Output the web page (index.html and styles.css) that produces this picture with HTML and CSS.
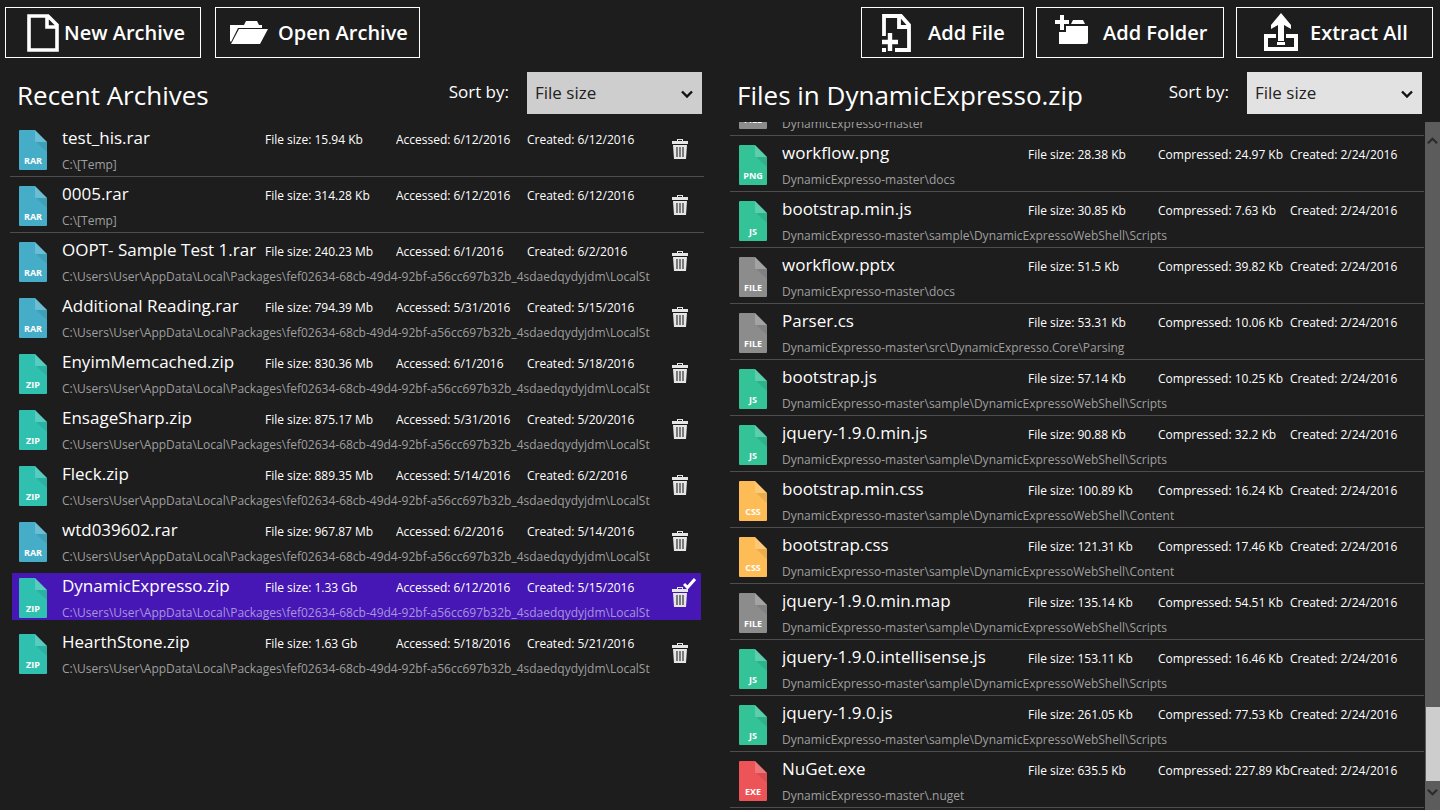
FILE: index.html
```html
<!DOCTYPE html>
<html lang="en">
<head>
    <meta charset="UTF-8">
    <meta name="viewport" content="width=device-width, initial-scale=1.0">
    <title>Archives</title>
    <link rel="stylesheet" href="styles.css">
</head>
<body>
    <!-- shared icons -->
    <svg class="icon-defs" aria-hidden="true">
        <symbol id="file" viewBox="0 0 28 40">
            <path d="M1 0h15l12 12v27a1 1 0 0 1-1 1H1a1 1 0 0 1-1-1V1a1 1 0 0 1 1-1z" fill="currentColor"/>
            <path d="M17 12h11v10z" fill="#000" opacity=".08"/>
            <path d="M16 0l12 12H17a1 1 0 0 1-1-1z" fill="#fff" opacity=".2"/>
        </symbol>
        <symbol id="trash" viewBox="0 0 16 20">
            <path d="M5 2V0h6v2h5v3H0V2h5zm1 0h4V1H6z" fill="currentColor"/>
            <path d="M1 6h14l-1 14H2z" fill="currentColor"/>
            <path d="M5 8v10M8 8v10M11 8v10" stroke="#333" stroke-width="1.2" fill="none"/>
        </symbol>
        <symbol id="chevron" viewBox="0 0 12 8">
            <path d="M1 1.5l5 5 5-5" fill="none" stroke="currentColor" stroke-width="2.4"/>
        </symbol>
    </svg>

    <div class="toolbar">
        <button type="button" class="tool new-archive">
            <svg width="32" height="38" viewBox="0 0 32 38"><path d="M2 2h19l9 9v25H2z M20 2v11h10" fill="none" stroke="#fff" stroke-width="3.6"/></svg>
            New Archive
        </button>
        <button type="button" class="tool open-archive">
            <svg width="38" height="24" viewBox="0 0 38 24"><path d="M0 20V4h14l2-4h11l2 4h3v3H8L1 21z" fill="#fff"/><path d="M9 8h29l-8 15H1z" fill="#fff"/></svg>
            Open Archive
        </button>
        <div class="spacer"></div>
        <button type="button" class="tool add-file">
            <svg width="32" height="38" viewBox="0 0 32 38">
                <path d="M4 22V2h17l8 9v25H15M19 2v11h10" fill="none" stroke="#fff" stroke-width="3.8"/>
                <path d="M10 19v18M2 28h16" stroke="#fff" stroke-width="4.4"/>
                <path d="M2 34h4v4H2z" fill="#fff"/>
            </svg>
            Add File
        </button>
        <button type="button" class="tool add-folder">
            <svg width="34" height="38" viewBox="0 0 34 38">
                <path d="M8 1v15M1 8h14" stroke="#fff" stroke-width="4"/>
                <path d="M5 18h7v-6h22v16a2 2 0 0 1-2 2H5zM17 10l2-4h10l2 4z" fill="#fff"/>
            </svg>
            Add Folder
        </button>
        <button type="button" class="tool extract">
            <svg width="38" height="40" viewBox="0 0 38 40">
                <path d="M14 23H4v13h30V23H24" fill="none" stroke="#fff" stroke-width="4"/>
                <path d="M19 0l10 12v4l-7-4v16h-6V12l-7 4v-4zM15 29h8v3h-8z" fill="#fff"/>
            </svg>
            Extract All
        </button>
    </div>

    <div class="panels">
        <div class="panel">
            <div class="panel-head">
                <h2>Recent Archives</h2>
                <label for="sort-archives">Sort by:</label>
                <div class="select-box">
                    <select id="sort-archives"><option>File size</option><option>Name</option></select>
                    <svg class="chevron"><use href="#chevron"/></svg>
                </div>
            </div>
            <div class="archives">
                <div class="row lined">
                    <svg class="file-icon rar"><use href="#file"/><text x="14" y="34">RAR</text></svg>
                    <div class="info"><span class="name">test_his.rar</span><span>File size: 15.94 Kb</span><span>Accessed: 6/12/2016</span><span>Created: 6/12/2016</span><span class="path">C:\[Temp]</span></div>
                    <button type="button" class="delete" aria-label="Delete"><svg><use href="#trash"/></svg></button>
                </div>
                <div class="row lined">
                    <svg class="file-icon rar"><use href="#file"/><text x="14" y="34">RAR</text></svg>
                    <div class="info"><span class="name">0005.rar</span><span>File size: 314.28 Kb</span><span>Accessed: 6/12/2016</span><span>Created: 6/12/2016</span><span class="path">C:\[Temp]</span></div>
                    <button type="button" class="delete" aria-label="Delete"><svg><use href="#trash"/></svg></button>
                </div>
                <div class="row">
                    <svg class="file-icon rar"><use href="#file"/><text x="14" y="34">RAR</text></svg>
                    <div class="info"><span class="name">OOPT- Sample Test 1.rar</span><span>File size: 240.23 Mb</span><span>Accessed: 6/1/2016</span><span>Created: 6/2/2016</span><span class="path">C:\Users\User\AppData\Local\Packages\fef02634-68cb-49d4-92bf-a56cc697b32b_4sdaedqydyjdm\LocalSt</span></div>
                    <button type="button" class="delete" aria-label="Delete"><svg><use href="#trash"/></svg></button>
                </div>
                <div class="row">
                    <svg class="file-icon rar"><use href="#file"/><text x="14" y="34">RAR</text></svg>
                    <div class="info"><span class="name">Additional Reading.rar</span><span>File size: 794.39 Mb</span><span>Accessed: 5/31/2016</span><span>Created: 5/15/2016</span><span class="path">C:\Users\User\AppData\Local\Packages\fef02634-68cb-49d4-92bf-a56cc697b32b_4sdaedqydyjdm\LocalSt</span></div>
                    <button type="button" class="delete" aria-label="Delete"><svg><use href="#trash"/></svg></button>
                </div>
                <div class="row">
                    <svg class="file-icon zip"><use href="#file"/><text x="14" y="34">ZIP</text></svg>
                    <div class="info"><span class="name">EnyimMemcached.zip</span><span>File size: 830.36 Mb</span><span>Accessed: 6/1/2016</span><span>Created: 5/18/2016</span><span class="path">C:\Users\User\AppData\Local\Packages\fef02634-68cb-49d4-92bf-a56cc697b32b_4sdaedqydyjdm\LocalSt</span></div>
                    <button type="button" class="delete" aria-label="Delete"><svg><use href="#trash"/></svg></button>
                </div>
                <div class="row">
                    <svg class="file-icon zip"><use href="#file"/><text x="14" y="34">ZIP</text></svg>
                    <div class="info"><span class="name">EnsageSharp.zip</span><span>File size: 875.17 Mb</span><span>Accessed: 5/31/2016</span><span>Created: 5/20/2016</span><span class="path">C:\Users\User\AppData\Local\Packages\fef02634-68cb-49d4-92bf-a56cc697b32b_4sdaedqydyjdm\LocalSt</span></div>
                    <button type="button" class="delete" aria-label="Delete"><svg><use href="#trash"/></svg></button>
                </div>
                <div class="row">
                    <svg class="file-icon zip"><use href="#file"/><text x="14" y="34">ZIP</text></svg>
                    <div class="info"><span class="name">Fleck.zip</span><span>File size: 889.35 Mb</span><span>Accessed: 5/14/2016</span><span>Created: 6/2/2016</span><span class="path">C:\Users\User\AppData\Local\Packages\fef02634-68cb-49d4-92bf-a56cc697b32b_4sdaedqydyjdm\LocalSt</span></div>
                    <button type="button" class="delete" aria-label="Delete"><svg><use href="#trash"/></svg></button>
                </div>
                <div class="row">
                    <svg class="file-icon rar"><use href="#file"/><text x="14" y="34">RAR</text></svg>
                    <div class="info"><span class="name">wtd039602.rar</span><span>File size: 967.87 Mb</span><span>Accessed: 6/2/2016</span><span>Created: 5/14/2016</span><span class="path">C:\Users\User\AppData\Local\Packages\fef02634-68cb-49d4-92bf-a56cc697b32b_4sdaedqydyjdm\LocalSt</span></div>
                    <button type="button" class="delete" aria-label="Delete"><svg><use href="#trash"/></svg></button>
                </div>
                <div class="row selected">
                    <svg class="file-icon zip"><use href="#file"/><text x="14" y="34">ZIP</text></svg>
                    <div class="info"><span class="name">DynamicExpresso.zip</span><span>File size: 1.33 Gb</span><span>Accessed: 6/12/2016</span><span>Created: 5/15/2016</span><span class="path">C:\Users\User\AppData\Local\Packages\fef02634-68cb-49d4-92bf-a56cc697b32b_4sdaedqydyjdm\LocalSt</span></div>
                    <button type="button" class="delete" aria-label="Delete"><svg><use href="#trash"/></svg></button>
                    <svg class="check" viewBox="0 0 13 11"><path d="M1 6l3.500 3.500L12 1" fill="none" stroke="#fff" stroke-width="3"/></svg>
                </div>
                <div class="row">
                    <svg class="file-icon zip"><use href="#file"/><text x="14" y="34">ZIP</text></svg>
                    <div class="info"><span class="name">HearthStone.zip</span><span>File size: 1.63 Gb</span><span>Accessed: 5/18/2016</span><span>Created: 5/21/2016</span><span class="path">C:\Users\User\AppData\Local\Packages\fef02634-68cb-49d4-92bf-a56cc697b32b_4sdaedqydyjdm\LocalSt</span></div>
                    <button type="button" class="delete" aria-label="Delete"><svg><use href="#trash"/></svg></button>
                </div>
            </div>
        </div>

        <div class="panel">
            <div class="panel-head">
                <h2>Files in DynamicExpresso.zip</h2>
                <label for="sort-files">Sort by:</label>
                <div class="select-box light">
                    <select id="sort-files"><option>File size</option><option>Name</option></select>
                    <svg class="chevron"><use href="#chevron"/></svg>
                </div>
            </div>
            <div class="files-area">
                <div class="files">
                    <div class="row lined">
                        <svg class="file-icon other"><use href="#file"/><text x="14" y="34">FILE</text></svg>
                        <div class="info"><span class="name"></span><span></span><span></span><span></span><span class="path">DynamicExpresso-master</span></div>
                    </div>
                    <div class="row lined">
                        <svg class="file-icon code"><use href="#file"/><text x="14" y="34">PNG</text></svg>
                        <div class="info"><span class="name">workflow.png</span><span>File size: 28.38 Kb</span><span>Compressed: 24.97 Kb</span><span>Created: 2/24/2016</span><span class="path">DynamicExpresso-master\docs</span></div>
                    </div>
                    <div class="row lined">
                        <svg class="file-icon code"><use href="#file"/><text x="14" y="34">JS</text></svg>
                        <div class="info"><span class="name">bootstrap.min.js</span><span>File size: 30.85 Kb</span><span>Compressed: 7.63 Kb</span><span>Created: 2/24/2016</span><span class="path">DynamicExpresso-master\sample\DynamicExpressoWebShell\Scripts</span></div>
                    </div>
                    <div class="row lined">
                        <svg class="file-icon other"><use href="#file"/><text x="14" y="34">FILE</text></svg>
                        <div class="info"><span class="name">workflow.pptx</span><span>File size: 51.5 Kb</span><span>Compressed: 39.82 Kb</span><span>Created: 2/24/2016</span><span class="path">DynamicExpresso-master\docs</span></div>
                    </div>
                    <div class="row lined">
                        <svg class="file-icon other"><use href="#file"/><text x="14" y="34">FILE</text></svg>
                        <div class="info"><span class="name">Parser.cs</span><span>File size: 53.31 Kb</span><span>Compressed: 10.06 Kb</span><span>Created: 2/24/2016</span><span class="path">DynamicExpresso-master\src\DynamicExpresso.Core\Parsing</span></div>
                    </div>
                    <div class="row lined">
                        <svg class="file-icon code"><use href="#file"/><text x="14" y="34">JS</text></svg>
                        <div class="info"><span class="name">bootstrap.js</span><span>File size: 57.14 Kb</span><span>Compressed: 10.25 Kb</span><span>Created: 2/24/2016</span><span class="path">DynamicExpresso-master\sample\DynamicExpressoWebShell\Scripts</span></div>
                    </div>
                    <div class="row lined">
                        <svg class="file-icon code"><use href="#file"/><text x="14" y="34">JS</text></svg>
                        <div class="info"><span class="name">jquery-1.9.0.min.js</span><span>File size: 90.88 Kb</span><span>Compressed: 32.2 Kb</span><span>Created: 2/24/2016</span><span class="path">DynamicExpresso-master\sample\DynamicExpressoWebShell\Scripts</span></div>
                    </div>
                    <div class="row lined">
                        <svg class="file-icon css"><use href="#file"/><text x="14" y="34">CSS</text></svg>
                        <div class="info"><span class="name">bootstrap.min.css</span><span>File size: 100.89 Kb</span><span>Compressed: 16.24 Kb</span><span>Created: 2/24/2016</span><span class="path">DynamicExpresso-master\sample\DynamicExpressoWebShell\Content</span></div>
                    </div>
                    <div class="row lined">
                        <svg class="file-icon css"><use href="#file"/><text x="14" y="34">CSS</text></svg>
                        <div class="info"><span class="name">bootstrap.css</span><span>File size: 121.31 Kb</span><span>Compressed: 17.46 Kb</span><span>Created: 2/24/2016</span><span class="path">DynamicExpresso-master\sample\DynamicExpressoWebShell\Content</span></div>
                    </div>
                    <div class="row lined">
                        <svg class="file-icon other"><use href="#file"/><text x="14" y="34">FILE</text></svg>
                        <div class="info"><span class="name">jquery-1.9.0.min.map</span><span>File size: 135.14 Kb</span><span>Compressed: 54.51 Kb</span><span>Created: 2/24/2016</span><span class="path">DynamicExpresso-master\sample\DynamicExpressoWebShell\Scripts</span></div>
                    </div>
                    <div class="row lined">
                        <svg class="file-icon code"><use href="#file"/><text x="14" y="34">JS</text></svg>
                        <div class="info"><span class="name">jquery-1.9.0.intellisense.js</span><span>File size: 153.11 Kb</span><span>Compressed: 16.46 Kb</span><span>Created: 2/24/2016</span><span class="path">DynamicExpresso-master\sample\DynamicExpressoWebShell\Scripts</span></div>
                    </div>
                    <div class="row lined">
                        <svg class="file-icon code"><use href="#file"/><text x="14" y="34">JS</text></svg>
                        <div class="info"><span class="name">jquery-1.9.0.js</span><span>File size: 261.05 Kb</span><span>Compressed: 77.53 Kb</span><span>Created: 2/24/2016</span><span class="path">DynamicExpresso-master\sample\DynamicExpressoWebShell\Scripts</span></div>
                    </div>
                    <div class="row lined">
                        <svg class="file-icon exe"><use href="#file"/><text x="14" y="34">EXE</text></svg>
                        <div class="info"><span class="name">NuGet.exe</span><span>File size: 635.5 Kb</span><span>Compressed: 227.89 Kb</span><span>Created: 2/24/2016</span><span class="path">DynamicExpresso-master\.nuget</span></div>
                    </div>
                </div>
                <div class="scrollbar">
                    <button type="button" class="arrow up" aria-label="Scroll up"><svg><use href="#chevron"/></svg></button>
                    <div class="track"><div class="thumb"></div></div>
                    <button type="button" class="arrow" aria-label="Scroll down"><svg><use href="#chevron"/></svg></button>
                </div>
            </div>
        </div>
    </div>
</body>
</html>
```
FILE: styles.css
```css
* {
    box-sizing: border-box;
}
body {
    margin: 0;
    height: 100vh;
    display: flex;
    flex-direction: column;
    overflow: hidden;
    background-color: #1d1d1d;
    color: white;
    font-family: "Open Sans", "Noto Sans", sans-serif;
}
button {
    background: none;
    border: none;
    padding: 0;
    color: white;
    font-family: inherit;
    cursor: pointer;
}
.icon-defs {
    position: absolute;
    width: 0;
    height: 0;
}

/* top buttons */
.toolbar {
    display: flex;
    gap: 12px;
    padding: 7px 7px 0 5px;
}
.tool {
    display: flex;
    align-items: center;
    height: 51px;
    border: 1px solid white;
    font-size: 20px;
    font-weight: 600;
    white-space: nowrap;
}
.tool svg {
    flex-shrink: 0;
}
.new-archive {
    width: 196px;
    padding-left: 21px;
    gap: 5px;
    margin-right: 2px;
}
.open-archive {
    width: 205px;
    padding-left: 14px;
    gap: 10px;
}
.add-file {
    width: 163px;
    padding-left: 18px;
    gap: 16px;
}
.add-folder {
    width: 188px;
    padding-left: 17px;
    gap: 15px;
}
.extract {
    width: 197px;
    padding-left: 25px;
    gap: 10px;
}
.spacer {
    flex: 1;
}

/* panels */
.panels {
    flex: 1;
    min-height: 0;
    display: grid;
    grid-template-columns: 1fr 1fr;
}
.panel {
    min-width: 0;
    min-height: 0;
    display: flex;
    flex-direction: column;
}
.panel-head {
    display: flex;
    align-items: center;
    height: 64px;
    padding: 6px 18px 0 17px;
}
.panel-head h2 {
    flex: 1;
    margin: 0;
    font-size: 26px;
    font-weight: 400;
    line-height: 36px;
    padding-top: 4px;
}
.panel-head label {
    font-size: 17px;
    margin-right: 18px;
    padding-bottom: 4px;
}
.select-box {
    position: relative;
    width: 175px;
    height: 42px;
}
.select-box select {
    appearance: none;
    width: 100%;
    height: 100%;
    padding: 0 8px 2px;
    border: none;
    border-radius: 0;
    background-color: #cecece;
    color: #222;
    font-family: inherit;
    font-size: 17px;
}
.light select {
    background-color: #e2e2e2;
}
.chevron {
    position: absolute;
    right: 9px;
    top: 18px;
    width: 12px;
    height: 8px;
    color: #111;
    pointer-events: none;
}

/* lists */
.archives {
    padding: 0 16px 0 10px;
    margin-top: -1px;
}
.row {
    position: relative;
    display: flex;
    flex-shrink: 0;
    height: 56px;
    padding: 9px 9px 0;
    border-bottom: 1px solid transparent;
}
.lined {
    border-bottom-color: #4d4d4d;
}
.file-icon {
    flex-shrink: 0;
    width: 28px;
    height: 40px;
    margin-right: 15px;
}
.file-icon text {
    fill: white;
    font-size: 9px;
    font-weight: 700;
    text-anchor: middle;
}
.rar { color: #45adc7; }
.zip { color: #2fc0b0; }
.code { color: #34c297; }
.other { color: #8c8c8c; }
.css { color: #fdbc55; }
.exe { color: #ec5457; }
.info {
    flex: 1;
    min-width: 0;
    display: grid;
    grid-template-columns: minmax(0, 1fr) 131px 131px 133px;
    grid-template-rows: 24px 24px;
    margin-top: -4px;
    font-size: 12px;
    line-height: 28px;
    white-space: nowrap;
}
.info span {
    overflow: hidden;
    height: 28px;
}
.info .name {
    font-size: 17px;
    line-height: 24px;
}
.info .path {
    grid-column: 1 / -1;
    line-height: 30px;
    color: #9f9f9f;
}
.delete {
    width: 16px;
    height: 20px;
    margin: 9px 7px 0 12px;
    color: #e6e6e6;
}
.delete svg {
    display: block;
    width: 16px;
    height: 20px;
}
.selected {
    background: linear-gradient(#4617b4, #4617b4) 2px 4px / calc(100% - 5px) 47px no-repeat;
}
.selected .path {
    color: #a894dc;
}
.check {
    position: absolute;
    top: 9px;
    right: 8px;
    width: 13px;
    height: 11px;
}

/* opened archive */
.files-area {
    flex: 1;
    min-height: 0;
    display: flex;
}
.files {
    flex: 1;
    min-width: 0;
    display: flex;
    flex-direction: column;
    justify-content: flex-end;
    overflow: hidden;
    padding: 0 1px 2px 10px;
}
.files .row {
    padding-right: 0;
}
.files .info {
    grid-template-columns: minmax(0, 1fr) 130px 132px 134px;
}
.scrollbar {
    display: flex;
    flex-direction: column;
    width: 15px;
    background-color: #5c5c5c;
}
.arrow {
    height: 29px;
    padding-bottom: 8px;
    color: #2b2b2b;
}
.arrow svg {
    display: block;
    margin: auto;
    width: 11px;
    height: 8px;
}
.up {
    padding: 8px 0 0;
}
.up svg {
    transform: rotate(180deg);
}
.track {
    flex: 1;
    display: flex;
    flex-direction: column;
    justify-content: flex-end;
}
.thumb {
    height: 74px;
    margin-left: 1px;
    background-color: #cdcdcd;
}
```
